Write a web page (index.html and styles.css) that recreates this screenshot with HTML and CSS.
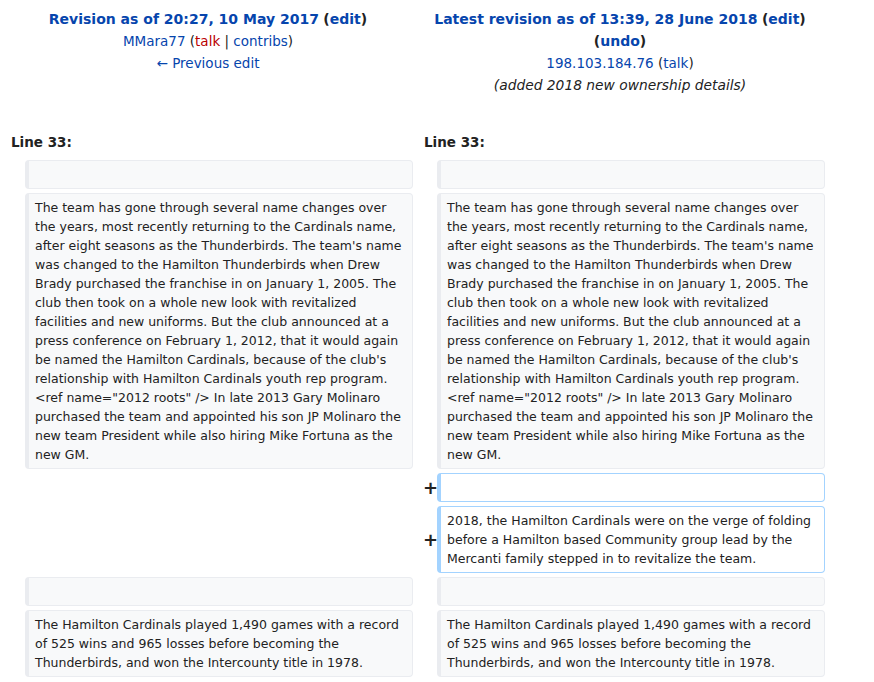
FILE: index.html
```html
<!DOCTYPE html>
<html>
<head>
<meta charset="utf-8">
<title>Diff</title>
<link rel="stylesheet" href="styles.css">
</head>
<body>
<div class="page">
  <div class="diff-header">
    <div class="diff-otitle">
      <div class="rev-line bold-line"><a class="strong">Revision as of 20:27, 10 May 2017</a> <b>(<a>edit</a>)</b></div>
      <div class="rev-line"><a>MMara77</a> (<a class="new">talk</a> | <a>contribs</a>)</div>
      <div class="rev-line"><a>← Previous edit</a></div>
    </div>
    <div class="diff-ntitle">
      <div class="rev-line bold-line"><a class="strong">Latest revision as of 13:39, 28 June 2018</a> <b>(<a>edit</a>)</b></div>
      <div class="rev-line bold-line"><b>(<a>undo</a>)</b></div>
      <div class="rev-line"><a>198.103.184.76</a> (<a>talk</a>)</div>
      <div class="rev-line comment">(added 2018 new ownership details)</div>
    </div>
  </div>

  <div class="diff-body">
    <div class="lineno left">Line 33:</div>
    <div class="lineno right">Line 33:</div>

    <div class="ctx left"></div>
    <div class="ctx right"></div>

    <div class="ctx left">The team has gone through several name changes over the years, most recently returning to the Cardinals name, after eight seasons as the Thunderbirds. The team's name was changed to the Hamilton Thunderbirds when Drew Brady purchased the franchise in on January 1, 2005. The club then took on a whole new look with revitalized facilities and new uniforms. But the club announced at a press conference on February 1, 2012, that it would again be named the Hamilton Cardinals, because of the club's relationship with Hamilton Cardinals youth rep program. &lt;ref name="2012 roots" /&gt; In late 2013 Gary Molinaro purchased the team and appointed his son JP Molinaro the new team President while also hiring Mike Fortuna as the new GM.</div>
    <div class="ctx right">The team has gone through several name changes over the years, most recently returning to the Cardinals name, after eight seasons as the Thunderbirds. The team's name was changed to the Hamilton Thunderbirds when Drew Brady purchased the franchise in on January 1, 2005. The club then took on a whole new look with revitalized facilities and new uniforms. But the club announced at a press conference on February 1, 2012, that it would again be named the Hamilton Cardinals, because of the club's relationship with Hamilton Cardinals youth rep program. &lt;ref name="2012 roots" /&gt; In late 2013 Gary Molinaro purchased the team and appointed his son JP Molinaro the new team President while also hiring Mike Fortuna as the new GM.</div>

    <div class="marker">+</div>
    <div class="added"></div>

    <div class="marker">+</div>
    <div class="added">2018, the Hamilton Cardinals were on the verge of folding before a Hamilton based Community group lead by the Mercanti family stepped in to revitalize the team.</div>

    <div class="ctx left"></div>
    <div class="ctx right"></div>

    <div class="ctx left">The Hamilton Cardinals played 1,490 games with a record of 525 wins and 965 losses before becoming the Thunderbirds, and won the Intercounty title in 1978.</div>
    <div class="ctx right">The Hamilton Cardinals played 1,490 games with a record of 525 wins and 965 losses before becoming the Thunderbirds, and won the Intercounty title in 1978.</div>
  </div>
</div>
</body>
</html>
```
FILE: styles.css
```css
html, body {
  margin: 0;
  padding: 0;
  background: #ffffff;
}

body {
  font-family: "DejaVu Sans", sans-serif;
  color: #222222;
}

a {
  color: #0645ad;
  text-decoration: none;
}

a.new {
  color: #ba0000;
}

.page {
  padding: 8px 0 0 8px;
}

.diff-header {
  display: grid;
  grid-template-columns: 400px 416px;
  column-gap: 4px;
  font-size: 13.5px;
  line-height: 22px;
}

.diff-otitle,
.diff-ntitle {
  text-align: center;
}

.bold-line {
  font-size: 14px;
}

.strong {
  font-weight: bold;
}

.comment {
  font-style: italic;
  font-size: 13.8px;
  color: #222222;
}

.diff-body {
  display: grid;
  grid-template-columns: 14px 388px 11px 13px 388px;
  row-gap: 4px;
  margin-top: 37px;
  margin-left: 3px;
  font-size: 12.5px;
  line-height: 19px;
}

.lineno {
  font-weight: bold;
  font-size: 13.5px;
  padding-bottom: 4px;
}

.lineno.left {
  grid-column: 1 / 3;
}

.lineno.right {
  grid-column: 4 / 6;
}

.ctx,
.added {
  box-sizing: border-box;
  min-height: 29px;
  padding: 4px 6px;
  border-radius: 4px;
  overflow-wrap: break-word;
}

.ctx {
  background: #f8f9fa;
  border: 1px solid #eaecf0;
  border-left-width: 4px;
  color: #222222;
}

.ctx.left {
  grid-column: 2;
}

.ctx.right {
  grid-column: 5;
}

.added {
  grid-column: 5;
  background: #ffffff;
  border: 1px solid #a3d3ff;
  border-left-width: 4px;
}

.marker {
  grid-column: 4;
  display: flex;
  align-items: center;
  justify-content: center;
  font-weight: bold;
  font-size: 18px;
  color: #222222;
}
```
